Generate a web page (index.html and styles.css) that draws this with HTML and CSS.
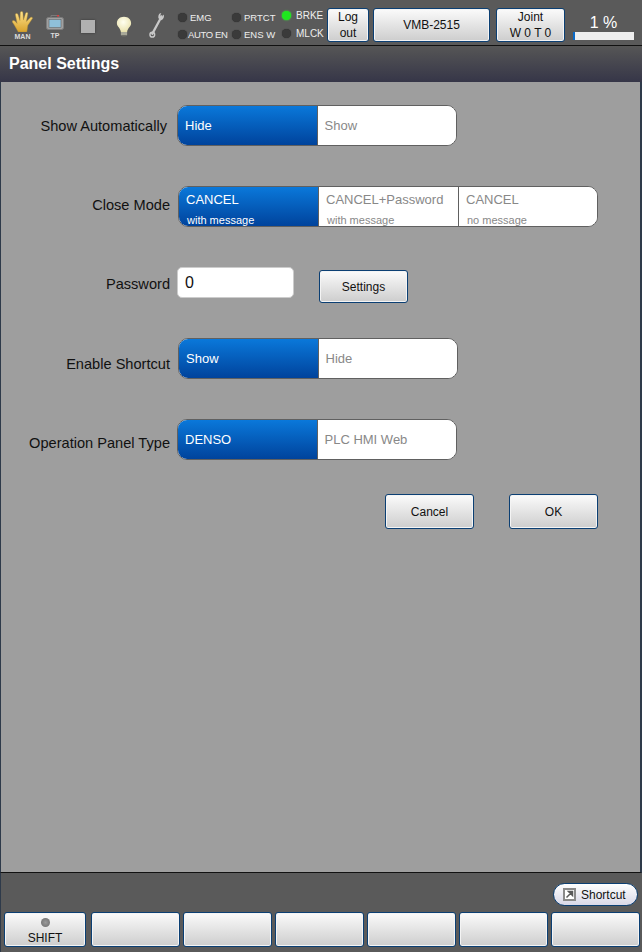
FILE: index.html
```html
<!DOCTYPE html>
<html lang="en">
<head>
  <meta charset="UTF-8">
  <title>Panel Settings</title>
  <link rel="stylesheet" href="styles.css">
</head>
<body>
  <div class="top-bar">
    <div class="status-icons">
      <div class="icon-cell icon-man">
        <svg width="21" height="21" viewBox="0.5 0 18.5 22" preserveAspectRatio="none">
          <defs>
            <linearGradient id="hand" x1="0" y1="0" x2="0" y2="1">
              <stop offset="0" stop-color="#ffe38c"/>
              <stop offset="1" stop-color="#d8a22c"/>
            </linearGradient>
          </defs>
          <path d="M6 22 C4 18 3 15 1 12 C0 10 2 9 3.500 11 L5 13 L3.500 4 C3.300 2.300 5.300 2 5.800 3.700 L7.500 10 L7.800 1.800 C7.900 0 10 0 10.100 1.800 L10.600 9.500 L12.400 2.500 C12.900 .8 14.800 1.300 14.400 3 L13.200 11 L16.500 7 C17.800 5.700 19.300 7 18.200 8.500 L14.500 15 C14 18 14 20 13.500 22 Z" fill="url(#hand)" stroke="#b08a30" stroke-width=".4"/>
        </svg>
        <span class="icon-label">MAN</span>
      </div>
      <div class="icon-cell icon-tp">
        <svg width="18" height="15" viewBox="0 0 18 15">
          <path d="M5 2.500 V.5 H13 V2.500" fill="none" stroke="#7a7a7a"/>
          <rect x="11" y="0" width="2" height="1.500" fill="#e04040"/>
          <rect x=".5" y="2.500" width="17" height="12" rx="2" fill="#a0a0a0" stroke="#7d7d7d"/>
          <rect x="3" y="4.500" width="12" height="8" fill="#8fc0da" stroke="#5a5a5a" stroke-width=".5"/>
        </svg>
        <span class="icon-label">TP</span>
      </div>
      <div class="icon-cell icon-stop"><div class="stop-box"></div></div>
      <div class="icon-cell icon-bulb">
        <svg width="16" height="21" viewBox="0 0 18 25" preserveAspectRatio="none">
          <defs>
            <radialGradient id="bulb" cx=".45" cy=".35" r=".7">
              <stop offset="0" stop-color="#fffff0"/>
              <stop offset="1" stop-color="#e8e0a8"/>
            </radialGradient>
          </defs>
          <path d="M9 1 C4 1 1 4.500 1 8.500 C1 12.500 5 14 5.500 19 L12.500 19 C13 14 17 12.500 17 8.500 C17 4.500 14 1 9 1 Z" fill="url(#bulb)"/>
          <rect x="5.500" y="19" width="7" height="4" fill="#a8a898"/>
          <rect x="7" y="23" width="4" height="1.500" fill="#6e6e66"/>
        </svg>
      </div>
      <div class="icon-cell icon-wrench">
        <svg width="17" height="26" viewBox="0 0 18 27" preserveAspectRatio="none">
          <path d="M3 23.500 L11.500 8 M11.500 8 L13.500 3.500" fill="none" stroke="#c9c9c9" stroke-width="2.400"/>
          <path d="M13 8.500 C15.500 7.500 16.500 4.500 15.500 2.500 L13.500 5.500 L11.500 4.500 L13 1 C10.500 1 9.500 4 10 6.500 Z" fill="#c9c9c9"/>
          <circle cx="3.500" cy="23.500" r="2.500" fill="none" stroke="#c9c9c9" stroke-width="1.500"/>
        </svg>
      </div>
    </div>
    <div class="lamps">
      <div class="lamp"><i></i>EMG</div>
      <div class="lamp"><i></i>PRTCT</div>
      <div class="lamp lamp-right"><i class="on"></i>BRKE</div>
      <div class="lamp lamp-tight"><i></i>AUTO EN</div>
      <div class="lamp"><i></i>ENS W</div>
      <div class="lamp lamp-right lamp-low"><i></i>MLCK</div>
    </div>
    <button class="btn btn-logout">Log<br>out</button>
    <button class="btn btn-robot">VMB-2515</button>
    <button class="btn btn-joint">Joint<br>W 0 T 0</button>
    <div class="speed">
      <div class="speed-value">1 %</div>
      <div class="speed-bar"><div class="speed-fill"></div></div>
    </div>
  </div>

  <div class="title-bar">Panel Settings</div>

  <div class="content">
    <div class="row row-auto">
      <label>Show Automatically</label>
      <div class="segment seg-two">
        <div class="seg-item active">Hide</div>
        <div class="seg-item">Show</div>
      </div>
    </div>
    <div class="row row-close">
      <label>Close Mode</label>
      <div class="segment seg-three">
        <div class="seg-item active">CANCEL<small>with message</small></div>
        <div class="seg-item">CANCEL+Password<small>with message</small></div>
        <div class="seg-item">CANCEL<small>no message</small></div>
      </div>
    </div>
    <div class="row row-password">
      <label>Password</label>
      <div class="password-box">0</div>
      <button class="btn btn-form btn-settings">Settings</button>
    </div>
    <div class="row row-shortcut">
      <label>Enable Shortcut</label>
      <div class="segment seg-two">
        <div class="seg-item active">Show</div>
        <div class="seg-item">Hide</div>
      </div>
    </div>
    <div class="row row-panel">
      <label>Operation Panel Type</label>
      <div class="segment seg-two">
        <div class="seg-item active">DENSO</div>
        <div class="seg-item">PLC HMI Web</div>
      </div>
    </div>
    <div class="actions">
      <button class="btn btn-form">Cancel</button>
      <button class="btn btn-form">OK</button>
    </div>
  </div>

  <div class="bottom-bar">
    <div class="shortcut-line">
      <button class="shortcut">
        <svg width="13" height="13" viewBox="0 0 13 13">
          <rect x="1" y="1" width="11" height="11" fill="#fff" stroke="#8a8a8a" stroke-width="2"/>
          <path d="M3.500 9.500 L7.500 5.500 M5.500 3.500 L9.500 3.500 L9.500 7.500 Z" stroke="#5a5a5a" stroke-width="1.500" fill="#5a5a5a"/>
        </svg>
        Shortcut
      </button>
    </div>
    <div class="func-keys">
      <button class="btn func-key func-shift"><i></i>SHIFT</button>
      <button class="btn func-key"></button>
      <button class="btn func-key"></button>
      <button class="btn func-key"></button>
      <button class="btn func-key"></button>
      <button class="btn func-key"></button>
      <button class="btn func-key"></button>
    </div>
  </div>
</body>
</html>
```
FILE: styles.css
```css
* {
  box-sizing: border-box;
  margin: 0;
  padding: 0;
}
body {
  width: 642px;
  height: 952px;
  overflow: hidden;
  display: flex;
  flex-direction: column;
  font-family: "Liberation Sans", Arial, sans-serif;
  background-color: #5a5a5a;
}

/* shared button */
.btn {
  font-family: inherit;
  color: #111;
  border: 1px solid #0b3f73;
  border-radius: 3px;
  background: linear-gradient(#fbfbfb, #cdcdcd);
  box-shadow: inset 0 0 0 1px #f4f4f4;
}

/* top bar */
.top-bar {
  height: 46px;
  flex: none;
  display: flex;
  align-items: flex-start;
  padding-top: 8px;
  background-color: #5a5a5a;
  border-bottom: 1px solid #111;
}
.status-icons {
  display: flex;
  width: 177px;
  height: 36px;
  flex: none;
}
.icon-cell {
  display: flex;
  flex-direction: column;
  align-items: center;
  flex: none;
}
.icon-man {
  width: 21px;
  margin-left: 12px;
  margin-top: 3px;
}
.icon-tp {
  width: 18px;
  margin-left: 13px;
  margin-top: 7px;
}
.icon-stop {
  width: 14px;
  margin-left: 17px;
  margin-top: 12px;
}
.stop-box {
  width: 14px;
  height: 13px;
  background-color: #b0b0b0;
  box-shadow: 0 0 2px #333;
}
.icon-bulb {
  width: 16px;
  margin-left: 21px;
  margin-top: 8px;
}
.icon-wrench {
  width: 17px;
  margin-left: 17px;
  margin-top: 4px;
}
.icon-label {
  font-size: 7px;
  font-weight: bold;
  color: #ddd;
  line-height: 8px;
  margin-top: 1px;
}
.icon-tp .icon-label {
  margin-top: 2px;
}
.icon-cell svg {
  display: block;
}
.lamps {
  width: 150px;
  height: 36px;
  flex: none;
  display: grid;
  grid-template-columns: 54px 50px 45px;
  grid-template-rows: 17px 17px;
  padding-top: 1px;
  padding-left: 1px;
}
.lamp {
  display: flex;
  align-items: center;
  gap: 3px;
  font-size: 9.5px;
  color: #eee;
  white-space: nowrap;
}
.lamp-tight {
  gap: 1px;
  letter-spacing: -.35px;
}
.lamp-right {
  gap: 5px;
  font-size: 10px;
  margin-bottom: 4px;
}
.lamp-low {
  margin-bottom: 3px;
}
.lamp i {
  width: 9px;
  height: 9px;
  border-radius: 50%;
  background-color: #3a3a3a;
  box-shadow: 0 0 1px #222;
  flex: none;
}
.lamp i.on {
  background-color: #1ee81e;
  box-shadow: 0 0 2px #3f3;
}
.btn-logout {
  width: 42px;
  height: 34px;
  flex: none;
  font-size: 12px;
  line-height: 16px;
}
.btn-robot {
  width: 117px;
  height: 34px;
  flex: none;
  margin-left: 4px;
  font-size: 12px;
}
.btn-joint {
  width: 69px;
  height: 34px;
  flex: none;
  margin-left: 6px;
  font-size: 12px;
  line-height: 16px;
}
.speed {
  width: 61px;
  flex: none;
  margin-left: 8px;
  margin-top: 6px;
}
.speed-value {
  color: #fff;
  font-size: 16px;
  line-height: 18px;
  text-align: center;
}
.speed-bar {
  height: 8px;
  background-color: #eee;
}
.speed-fill {
  width: 2px;
  height: 8px;
  background-color: #0a6ac8;
}

/* title */
.title-bar {
  height: 36px;
  flex: none;
  padding-left: 9px;
  font-size: 16px;
  font-weight: bold;
  line-height: 35px;
  color: #fff;
  background: linear-gradient(#565656, #363648);
}

/* form */
.content {
  height: 791px;
  flex: none;
  padding-top: 23px;
  background-color: #9e9e9e;
  border-left: 1px solid #2e3a4a;
  border-right: 2px solid #2e3a4a;
  border-bottom: 1px solid #111;
}
.row {
  display: flex;
  align-items: center;
  height: 41px;
  margin-bottom: 40px;
}
.row label {
  width: 169px;
  flex: none;
  text-align: right;
  font-size: 14.6px;
  color: #111;
}
.row-auto label {
  width: 166px;
  margin-right: 10px;
}
.row-close label {
  margin-right: 8px;
  padding-bottom: 4px;
}
.row-shortcut label {
  margin-right: 8px;
  padding-top: 10px;
}
.row-password label {
  margin-right: 7px;
  margin-top: 9px;
}
.row-panel label {
  margin-right: 7px;
  padding-top: 7px;
}
.segment {
  display: flex;
  height: 41px;
  border: 1px solid #606060;
  border-radius: 10px;
  overflow: hidden;
  background-color: #fff;
  font-size: 13px;
}
.seg-two {
  width: 280px;
}
.seg-three {
  width: 420px;
}
.seg-item {
  flex: 1 1 0;
  padding-left: 7px;
  color: #888;
  background-color: #fff;
  border-left: 1px solid #606060;
  line-height: 39px;
}
.seg-item:first-child {
  border-left: 0;
}
.seg-item.active {
  color: #fff;
  background: linear-gradient(#0a78da, #00439c);
}
.seg-three .seg-item {
  flex: none;
  width: 140px;
  line-height: 14px;
  padding-top: 6px;
}
.seg-three .seg-item:first-child {
  width: 139px;
}
.seg-three .seg-item:last-child {
  flex: 1 1 0;
}
.seg-item small {
  display: block;
  font-size: 11px;
  line-height: 12px;
  margin-top: 7px;
  padding-left: 1px;
}
.row-password {
  align-items: flex-start;
  margin-bottom: 30px;
}
.password-box {
  width: 117px;
  height: 31px;
  padding-left: 7px;
  padding-top: 1px;
  font-size: 16px;
  line-height: 28px;
  color: #111;
  background-color: #fff;
  border: 1px solid #ccc;
  border-radius: 5px;
}
.btn-form {
  width: 89px;
  height: 35px;
  flex: none;
  font-size: 12px;
}
.btn-settings {
  height: 33px;
  margin-left: 25px;
  margin-top: 3px;
}
.actions {
  display: flex;
  justify-content: flex-end;
  gap: 35px;
  padding-right: 42px;
  margin-top: -6px;
}

/* bottom */
.bottom-bar {
  flex: 1;
  background-color: #5a5a5a;
  border-left: 1px solid #2e3a4a;
  padding-top: 10px;
}
.shortcut-line {
  display: flex;
  justify-content: flex-end;
  padding-right: 4px;
}
.shortcut {
  display: flex;
  align-items: center;
  gap: 5px;
  width: 85px;
  height: 23px;
  padding-left: 9px;
  font-family: inherit;
  font-size: 12px;
  color: #111;
  border: 1px solid #0b3f73;
  border-radius: 12px;
  background: linear-gradient(#fff, #d8d8e8);
}
.func-keys {
  display: flex;
  gap: 3px;
  padding-left: 3px;
  margin-top: 6px;
}
.func-key {
  width: 89px;
  height: 35px;
  flex: none;
  font-size: 12px;
}
.func-shift {
  width: 82px;
  margin-right: 2px;
  line-height: 14px;
  padding-top: 5px;
  display: flex;
  flex-direction: column;
  align-items: center;
  gap: 4px;
}
.func-shift i {
  width: 9px;
  height: 9px;
  border-radius: 50%;
  background: radial-gradient(#9a9a9a, #6a6a6a);
}
```
